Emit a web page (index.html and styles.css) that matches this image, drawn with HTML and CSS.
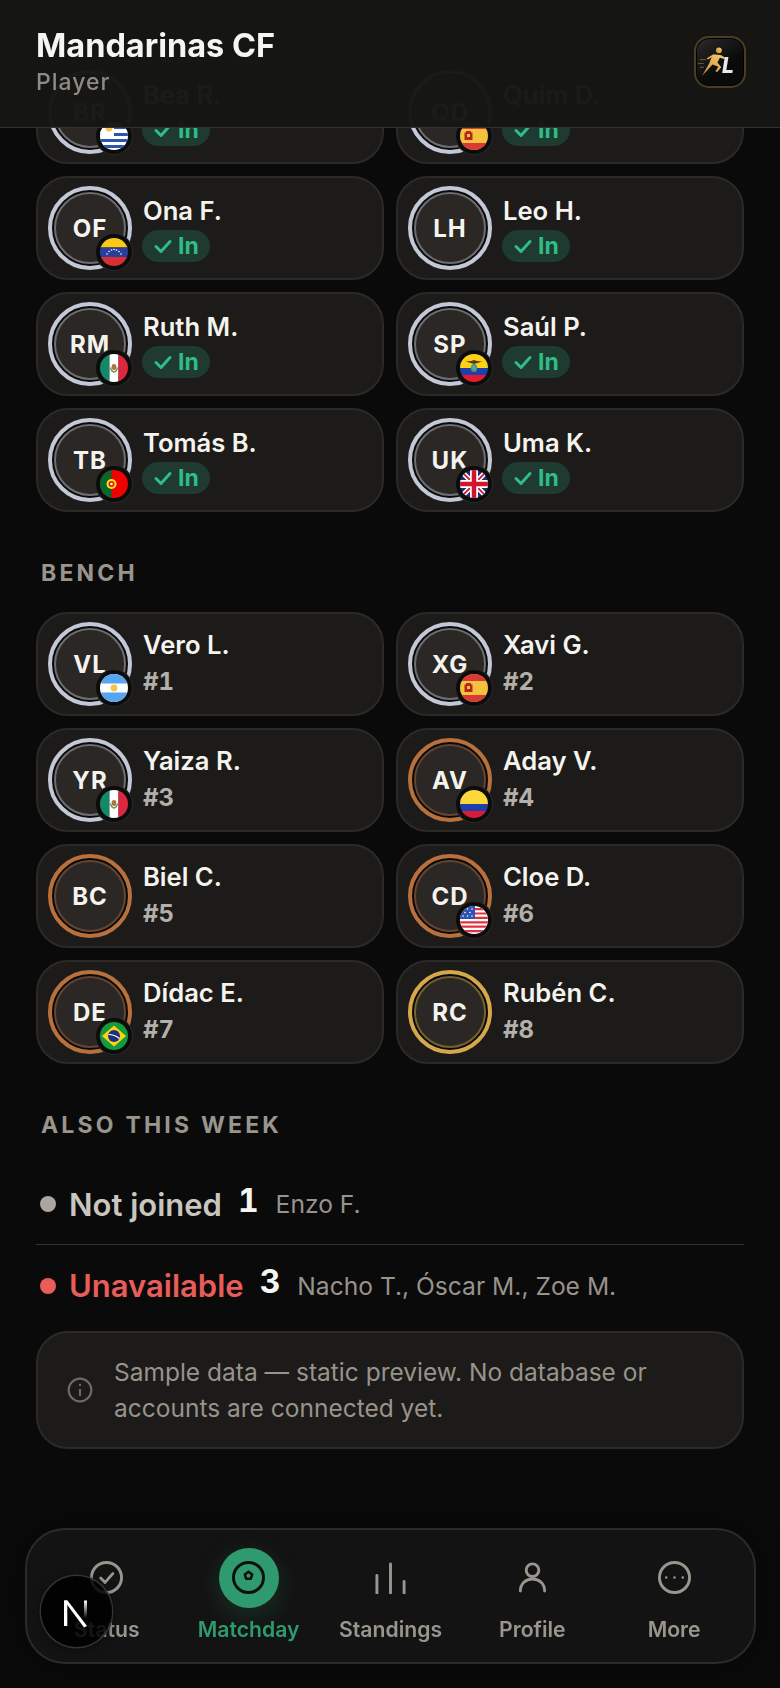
FILE: index.html
```html
<!DOCTYPE html>
<html lang="en">
<head>
<meta charset="utf-8">
<title>Mandarinas CF</title>
<link rel="stylesheet" href="styles.css">
</head>
<body>
<svg class="sprite" width="0" height="0" aria-hidden="true">
  <defs>
    <symbol id="uy" viewBox="0 0 28 28"><rect width="28" height="28" fill="#fff"/><path d="M0 4h28v3H0zM0 11h28v3H0zM0 17h28v3H0zM0 23h28v3H0z" fill="#2a56b0"/><rect width="14" height="14" fill="#fff"/><circle cx="9" cy="6" r="3.5" fill="#f6c544"/></symbol>
    <symbol id="ve" viewBox="0 0 28 28"><rect width="28" height="9.5" fill="#fcc917"/><rect y="9.5" width="28" height="9.5" fill="#2a3f9c"/><rect y="19" width="28" height="9" fill="#d92e32"/><g fill="#fff"><circle cx="7" cy="16" r=".8"/><circle cx="9" cy="13.5" r=".8"/><circle cx="11.5" cy="12" r=".8"/><circle cx="14" cy="11.5" r=".8"/><circle cx="16.5" cy="12" r=".8"/><circle cx="19" cy="13.5" r=".8"/><circle cx="21" cy="16" r=".8"/></g></symbol>
    <symbol id="mx" viewBox="0 0 28 28"><rect width="9.5" height="28" fill="#128a67"/><rect x="9.5" width="9" height="28" fill="#fff"/><rect x="18.5" width="9.5" height="28" fill="#dc2740"/><ellipse cx="14" cy="13" rx="2.4" ry="3" fill="#a9773f"/><path d="M10.5 13.5q.8 4 3.5 4.5q2.700-.5 3.500-4.500" fill="none" stroke="#7c9152" stroke-width="1.300"/></symbol>
    <symbol id="pt" viewBox="0 0 28 28"><rect width="28" height="28" fill="#f00000"/><rect width="11.500" height="28" fill="#06672f"/><circle cx="11.500" cy="14" r="5" fill="#ffe600"/><circle cx="11.500" cy="14" r="3" fill="#e21a1a"/><circle cx="11.500" cy="14" r="1.300" fill="#fff"/></symbol>
    <symbol id="es" viewBox="0 0 28 28"><rect width="28" height="28" fill="#f4c23c"/><rect width="28" height="7" fill="#d93a36"/><rect y="21" width="28" height="7" fill="#d93a36"/><path d="M4.500 10.500h1.500v-1.500h5v1.500h1.500v7.500h-8z" fill="#b3261e"/><rect x="7" y="12" width="3" height="3" fill="#f4c23c"/></symbol>
    <symbol id="ec" viewBox="0 0 28 28"><rect width="28" height="14" fill="#fcd116"/><rect y="14" width="28" height="7" fill="#1f3fae"/><rect y="21" width="28" height="7" fill="#e21c2c"/><path d="M5 7q5 1 9-1q4 2 9 1q-5 2-9 3q-4-1-9-3z" fill="#5a3a1c"/><ellipse cx="14" cy="14" rx="3.200" ry="4" fill="#4a9e58"/><ellipse cx="14" cy="14" rx="1.800" ry="2.400" fill="#5b9bd5"/></symbol>
    <symbol id="gb" viewBox="0 0 28 28"><rect width="28" height="28" fill="#1c2f74"/><path d="M0 0L28 28M28 0L0 28" stroke="#fff" stroke-width="5"/><path d="M0 0L28 28M28 0L0 28" stroke="#cf142b" stroke-width="1.800"/><path d="M14 0v28M0 14h28" stroke="#fff" stroke-width="8"/><path d="M14 0v28M0 14h28" stroke="#cf142b" stroke-width="4.500"/></symbol>
    <symbol id="ar" viewBox="0 0 28 28"><rect width="28" height="28" fill="#fff"/><rect width="28" height="9.500" fill="#56a5f0"/><rect y="18.500" width="28" height="9.500" fill="#56a5f0"/><circle cx="14" cy="14" r="3.400" fill="#f6c544"/></symbol>
    <symbol id="co" viewBox="0 0 28 28"><rect width="28" height="14" fill="#fcd83b"/><rect y="14" width="28" height="7" fill="#1f3fae"/><rect y="21" width="28" height="7" fill="#d81c33"/></symbol>
    <symbol id="us" viewBox="0 0 28 28"><rect width="28" height="28" fill="#fff"/><path d="M0 2h28v2.200H0zM0 6.400h28v2.200H0zM0 10.800h28V13H0zM0 15.200h28v2.200H0zM0 19.600h28v2.200H0zM0 24h28v2.200H0z" fill="#e0313f"/><rect width="15" height="13" fill="#2f52b8"/><g fill="#fff"><circle cx="3" cy="3" r=".8"/><circle cx="7.500" cy="3" r=".8"/><circle cx="12" cy="3" r=".8"/><circle cx="5" cy="6.500" r=".8"/><circle cx="10" cy="6.500" r=".8"/><circle cx="3" cy="10" r=".8"/><circle cx="7.500" cy="10" r=".8"/><circle cx="12" cy="10" r=".8"/></g></symbol>
    <symbol id="br" viewBox="0 0 28 28"><rect width="28" height="28" fill="#139b3c"/><path d="M14 3.500L26 14L14 24.500L2 14z" fill="#fcd116"/><circle cx="14" cy="14" r="6" fill="#1d2f80"/><path d="M8.500 12.500q6 0 11 4" stroke="#fff" stroke-width="1.200" fill="none"/></symbol>
    <symbol id="tick" viewBox="0 0 18 18"><path d="M2 9.500L7 14.500L16 4.500" fill="none" stroke="currentColor" stroke-width="3" stroke-linecap="round" stroke-linejoin="round"/></symbol>
  </defs>
</svg>

<header class="topbar">
  <div class="team">
    <h1 class="team-name">Mandarinas CF</h1>
    <p class="team-role">Player</p>
  </div>
  <div class="logo">
    <svg class="logo-run" viewBox="0 0 34 34" aria-hidden="true">
      <defs><linearGradient id="gold" x1="0" y1="1" x2="1" y2="0"><stop offset="0" stop-color="#c48a2a"/><stop offset="1" stop-color="#f9cf70"/></linearGradient></defs>
      <circle cx="21.500" cy="4.500" r="3" fill="url(#gold)"/>
      <path d="M9 12.500L16 8.500L24 9.500L28 12L27 13.500L22.500 12L20 17L24 22L19.500 27L18 26L21 21.500L15 19L4 31L11.500 18L14 11.500L10 14z" fill="url(#gold)"/>
      <path d="M2 14h6M0 18h6M2 22h4" stroke="#6b5427" stroke-width="1.200"/>
    </svg>
    <span class="logo-l">L</span>
  </div>
</header>

<main class="page">
  <section class="roster">
    <article class="card"><div class="avatar silver"><span class="avatar-face">BR</span><svg class="flag"><use href="#uy"/></svg></div><div class="info"><div class="name">Bea R.</div><div class="pill"><svg class="tick"><use href="#tick"/></svg>In</div></div></article>
    <article class="card"><div class="avatar silver"><span class="avatar-face">QD</span><svg class="flag"><use href="#es"/></svg></div><div class="info"><div class="name">Quim D.</div><div class="pill"><svg class="tick"><use href="#tick"/></svg>In</div></div></article>
    <article class="card"><div class="avatar silver"><span class="avatar-face">OF</span><svg class="flag"><use href="#ve"/></svg></div><div class="info"><div class="name">Ona F.</div><div class="pill"><svg class="tick"><use href="#tick"/></svg>In</div></div></article>
    <article class="card"><div class="avatar silver"><span class="avatar-face">LH</span></div><div class="info"><div class="name">Leo H.</div><div class="pill"><svg class="tick"><use href="#tick"/></svg>In</div></div></article>
    <article class="card"><div class="avatar silver"><span class="avatar-face">RM</span><svg class="flag"><use href="#mx"/></svg></div><div class="info"><div class="name">Ruth M.</div><div class="pill"><svg class="tick"><use href="#tick"/></svg>In</div></div></article>
    <article class="card"><div class="avatar silver"><span class="avatar-face">SP</span><svg class="flag"><use href="#ec"/></svg></div><div class="info"><div class="name">Saúl P.</div><div class="pill"><svg class="tick"><use href="#tick"/></svg>In</div></div></article>
    <article class="card"><div class="avatar silver"><span class="avatar-face">TB</span><svg class="flag"><use href="#pt"/></svg></div><div class="info"><div class="name">Tomás B.</div><div class="pill"><svg class="tick"><use href="#tick"/></svg>In</div></div></article>
    <article class="card"><div class="avatar silver"><span class="avatar-face">UK</span><svg class="flag"><use href="#gb"/></svg></div><div class="info"><div class="name">Uma K.</div><div class="pill"><svg class="tick"><use href="#tick"/></svg>In</div></div></article>
  </section>

  <h2 class="section-label">BENCH</h2>
  <section class="roster">
    <article class="card"><div class="avatar silver"><span class="avatar-face">VL</span><svg class="flag"><use href="#ar"/></svg></div><div class="info info-bench"><div class="name">Vero L.</div><div class="rank">#1</div></div></article>
    <article class="card"><div class="avatar silver"><span class="avatar-face">XG</span><svg class="flag"><use href="#es"/></svg></div><div class="info info-bench"><div class="name">Xavi G.</div><div class="rank">#2</div></div></article>
    <article class="card"><div class="avatar silver"><span class="avatar-face">YR</span><svg class="flag"><use href="#mx"/></svg></div><div class="info info-bench"><div class="name">Yaiza R.</div><div class="rank">#3</div></div></article>
    <article class="card"><div class="avatar bronze"><span class="avatar-face">AV</span><svg class="flag"><use href="#co"/></svg></div><div class="info info-bench"><div class="name">Aday V.</div><div class="rank">#4</div></div></article>
    <article class="card"><div class="avatar bronze"><span class="avatar-face">BC</span></div><div class="info info-bench"><div class="name">Biel C.</div><div class="rank">#5</div></div></article>
    <article class="card"><div class="avatar bronze"><span class="avatar-face">CD</span><svg class="flag"><use href="#us"/></svg></div><div class="info info-bench"><div class="name">Cloe D.</div><div class="rank">#6</div></div></article>
    <article class="card"><div class="avatar bronze"><span class="avatar-face">DE</span><svg class="flag"><use href="#br"/></svg></div><div class="info info-bench"><div class="name">Dídac E.</div><div class="rank">#7</div></div></article>
    <article class="card"><div class="avatar gold"><span class="avatar-face">RC</span></div><div class="info info-bench"><div class="name">Rubén C.</div><div class="rank">#8</div></div></article>
  </section>

  <h2 class="section-label">ALSO THIS WEEK</h2>
  <section class="also">
    <div class="also-row also-first">
      <span class="dot dot-grey"></span><span class="also-title">Not joined</span><span class="also-count">1</span><span class="also-names">Enzo F.</span>
    </div>
    <div class="also-row">
      <span class="dot dot-red"></span><span class="also-title also-red">Unavailable</span><span class="also-count">3</span><span class="also-names">Nacho T., Óscar M., Zoe M.</span>
    </div>
  </section>

  <aside class="note">
    <svg class="note-icon" viewBox="0 0 24 24" aria-hidden="true"><circle cx="12" cy="12" r="10.500"/><path d="M12 11v6.500"/><circle class="note-dot" cx="12" cy="7.300" r="1.100"/></svg>
    <p class="note-text">Sample data — static preview. No database or accounts are connected yet.</p>
  </aside>
</main>

<nav class="tabbar">
  <a class="tab">
    <span class="tab-icon"><svg viewBox="0 0 34 34"><circle cx="17" cy="17" r="15.500"/><path d="M11 17.500l4.500 4.500l8-9"/></svg></span>
    <span class="tab-label">Status</span>
  </a>
  <a class="tab tab-active">
    <span class="tab-icon tab-bubble"><svg viewBox="0 0 34 34"><circle cx="17" cy="17" r="15.500"/><path class="penta" d="M17 11L20.800 13.800L19.400 18.200H14.600L13.200 13.800Z"/></svg></span>
    <span class="tab-label">Matchday</span>
  </a>
  <a class="tab">
    <span class="tab-icon"><svg viewBox="0 0 34 34"><path d="M3 15v18M17 3v30M31 21v12"/></svg></span>
    <span class="tab-label">Standings</span>
  </a>
  <a class="tab">
    <span class="tab-icon"><svg viewBox="0 0 34 34"><circle cx="17" cy="9.500" r="6.500"/><path d="M4.500 31c0-7.500 5.500-12.500 12.500-12.500s12.500 5 12.500 12.500"/></svg></span>
    <span class="tab-label">Profile</span>
  </a>
  <a class="tab">
    <span class="tab-icon"><svg viewBox="0 0 34 34"><circle cx="17" cy="17" r="15.500"/><path class="dots" d="M8.500 17h.01M17 17h.01M25.500 17h.01"/></svg></span>
    <span class="tab-label">More</span>
  </a>
</nav>

<div class="devtool">
  <svg viewBox="0 0 34 34" aria-hidden="true">
    <defs><linearGradient id="nfade" x1="0" y1="0" x2="0" y2="1"><stop offset="0" stop-color="#fff"/><stop offset="1" stop-color="#fff" stop-opacity="0"/></linearGradient></defs>
    <path d="M4 5.500h3.300V31H4z" fill="#fff"/>
    <path d="M4 5.500h3.500L27 31l-3 1.500z" fill="#fff"/>
    <rect x="24" y="5.500" width="3" height="18" fill="url(#nfade)"/>
  </svg>
</div>
</body>
</html>
```

FILE: styles.css
```css
* { box-sizing: border-box; }

html, body {
  margin: 0;
  padding: 0;
  background: #0a0a0a;
  height: 1688px;
  overflow: hidden;
}

body {
  font-family: Inter, "Liberation Sans", sans-serif;
  color: #f5f3ee;
}

.sprite { position: absolute; }

/* Header */
.topbar {
  position: fixed;
  top: 0;
  left: 0;
  right: 0;
  height: 128px;
  padding: 25px 34px 0 36px;
  display: flex;
  justify-content: space-between;
  align-items: flex-start;
  background: rgba(21, 21, 19, 0.975);
  border-bottom: 1px solid #34312e;
  z-index: 10;
}

.team-name {
  margin: 0;
  font-size: 32.5px;
  line-height: 42px;
  font-weight: 700;
  color: #f7f5f0;
}

.team-role {
  margin: 0;
  font-size: 23px;
  line-height: 30px;
  font-weight: 500;
  letter-spacing: 1px;
  color: #8f8a82;
}

.logo {
  position: relative;
  width: 52px;
  height: 52px;
  margin-top: 11px;
  border-radius: 15px;
  border: 2px solid #4a3d24;
  background: linear-gradient(145deg, #2b2b2b, #0a0a0a 60%);
  box-shadow: inset 0 0 0 1px #000;
}

.logo-run {
  position: absolute;
  left: 2px;
  top: 8px;
  width: 33px;
  height: 33px;
}

.logo-l {
  position: absolute;
  left: 26px;
  top: 16px;
  font-size: 21px;
  line-height: 24px;
  font-weight: 800;
  font-style: italic;
  color: #e8e8e6;
}

/* Page */
.page {
  padding: 60px 36px 0;
}

.roster {
  display: grid;
  grid-template-columns: 348px 348px;
  grid-auto-rows: 104px;
  gap: 12px;
}

.card {
  display: flex;
  align-items: center;
  gap: 10px;
  padding: 0 10px;
  background: #1c1b19;
  border: 2px solid #2c2a27;
  border-radius: 32px;
}

.avatar {
  position: relative;
  flex: none;
  width: 84px;
  height: 84px;
  border-radius: 50%;
  border: 4px solid;
  padding: 2px;
  background: #0a0a0a;
}

.avatar-face {
  display: flex;
  align-items: center;
  justify-content: center;
  width: 100%;
  height: 100%;
  border-radius: 50%;
  border: 2px solid;
  background: #2a2725;
  font-size: 24px;
  font-weight: 700;
  letter-spacing: 1px;
  color: #f5f3ee;
}

.silver { border-color: #c3c8d6; }
.silver .avatar-face { border-color: #6d6e72; }
.bronze { border-color: #b8703c; }
.bronze .avatar-face { border-color: #654430; }
.gold { border-color: #d4a84b; }
.gold .avatar-face { border-color: #75602f; }

.flag {
  position: absolute;
  right: -4px;
  bottom: -4px;
  width: 36px;
  height: 36px;
  border-radius: 50%;
  border: 4px solid #0c0c0c;
  box-shadow: 0 0 0 1px #2c2a27;
  background: #0c0c0c;
}

.info {
  display: flex;
  flex-direction: column;
  align-items: flex-start;
  gap: 3px;
  margin-bottom: 1px;
}

.info-bench {
  gap: 6px;
  margin-bottom: 3px;
}

.name {
  padding-left: 1px;
  font-size: 25.6px;
  line-height: 33px;
  font-weight: 600;
  color: #f5f3ee;
}

.pill {
  display: flex;
  align-items: center;
  gap: 6px;
  height: 32px;
  padding: 0 11px 0 12px;
  border-radius: 16px;
  background: #1f3a30;
  color: #2fbd87;
  font-size: 23px;
  font-weight: 700;
}

.tick {
  width: 18px;
  height: 18px;
}

.rank {
  padding-left: 1px;
  font-size: 24px;
  line-height: 30px;
  font-weight: 700;
  font-variant-numeric: tabular-nums;
  color: #b4b0a9;
}

.section-label {
  margin: 47px 0 25px 5px;
  font-size: 23px;
  line-height: 28px;
  font-weight: 700;
  letter-spacing: 3.2px;
  color: #9a958c;
}

/* Also this week */
.also-row {
  display: flex;
  align-items: center;
  height: 81px;
}

.also-first {
  border-bottom: 1.5px solid #34302c;
}

.dot {
  flex: none;
  width: 16px;
  height: 16px;
  margin: 0 13px 0 4px;
  border-radius: 50%;
}

.dot-grey { background: #aaa69f; }
.dot-red { background: #e85c5a; }

.also-title {
  font-size: 31px;
  font-weight: 600;
  color: #c9c6bf;
}

.also-red { color: #e85c5a; }

.also-count {
  margin: -8px 0 0 16px;
  font-size: 32px;
  font-weight: 700;
  font-variant-numeric: tabular-nums;
  color: #f7f5f0;
}

.also-names {
  margin-left: 17px;
  font-size: 24.6px;
  color: #98938b;
}

.note {
  display: flex;
  align-items: center;
  gap: 21px;
  height: 118px;
  margin-top: 5px;
  padding: 0 30px 0 29px;
  background: #1c1b19;
  border: 2px solid #2c2a27;
  border-radius: 32px;
}

.note-icon {
  flex: none;
  width: 26px;
  height: 26px;
  fill: none;
  stroke: #6d6a64;
  stroke-width: 2;
}

.note-dot {
  fill: #6d6a64;
  stroke: none;
}

.note-text {
  margin: 0;
  font-size: 24.5px;
  line-height: 36px;
  color: #98938b;
}

/* Tab bar */
.tabbar {
  position: fixed;
  left: 25px;
  top: 1528px;
  width: 731px;
  height: 136px;
  padding: 0 9px;
  display: grid;
  grid-template-columns: repeat(5, 1fr);
  background: #131313;
  border: 2px solid #2e2a26;
  border-radius: 40px;
  box-shadow: 0 0 30px rgba(0, 0, 0, 0.4);
  z-index: 10;
}

.tab {
  position: relative;
  display: flex;
  flex-direction: column;
  align-items: center;
  padding-top: 18px;
  color: #9a958d;
}

.tab-icon {
  display: flex;
  align-items: center;
  justify-content: center;
  width: 60px;
  height: 60px;
  border-radius: 50%;
}

.tab-icon svg {
  width: 33px;
  height: 33px;
  margin-top: -2px;
  fill: none;
  stroke: currentColor;
  stroke-width: 3;
  stroke-linecap: round;
  stroke-linejoin: round;
}

.tab-icon .dots { stroke-width: 2.6; }
.tab-icon .penta { stroke-width: 2.6; }

.tab-label {
  margin-top: 7px;
  font-size: 21.2px;
  line-height: 28px;
  font-weight: 600;
}

.tab-active { color: #2f9a6e; }

.tab-bubble {
  background: #2f9a6e;
  color: #0d0f0d;
  box-shadow: 0 8px 26px rgba(47, 154, 110, 0.22);
}

.devtool {
  position: fixed;
  left: 41px;
  top: 1576px;
  width: 71px;
  height: 71px;
  display: flex;
  align-items: center;
  justify-content: center;
  border-radius: 50%;
  background: rgba(0, 0, 0, 0.86);
  box-shadow: 0 0 0 1.5px #333, 0 2px 10px rgba(0, 0, 0, 0.5);
  z-index: 20;
}

.devtool svg {
  width: 34px;
  height: 34px;
}
```
